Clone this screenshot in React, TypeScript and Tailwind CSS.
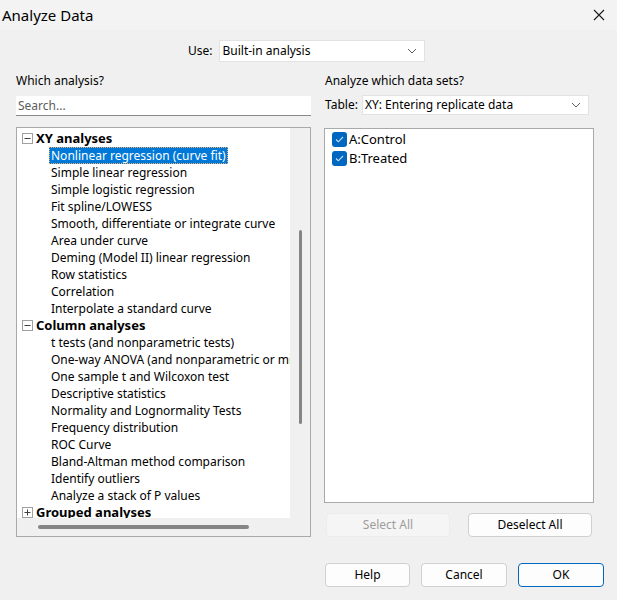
import React from 'react';

const xyItems = [
  'Nonlinear regression (curve fit)',
  'Simple linear regression',
  'Simple logistic regression',
  'Fit spline/LOWESS',
  'Smooth, differentiate or integrate curve',
  'Area under curve',
  'Deming (Model II) linear regression',
  'Row statistics',
  'Correlation',
  'Interpolate a standard curve',
];

const columnItems = [
  't tests (and nonparametric tests)',
  'One-way ANOVA (and nonparametric or mixed)',
  'One sample t and Wilcoxon test',
  'Descriptive statistics',
  'Normality and Lognormality Tests',
  'Frequency distribution',
  'ROC Curve',
  'Bland-Altman method comparison',
  'Identify outliers',
  'Analyze a stack of P values',
];

const Chevron = () => (
  <svg width="10" height="6" viewBox="0 0 10 6" className="shrink-0">
    <path d="M1 1l4 4 4-4" fill="none" stroke="#606060" strokeWidth="1" />
  </svg>
);

const Expander: React.FC<{ open: boolean }> = ({ open }) => (
  <span className="w-[11px] h-[11px] border border-[#a0a0a0] bg-white flex items-center justify-center shrink-0">
    <svg width="7" height="7" viewBox="0 0 7 7">
      <path d="M0.5 3.5h6" stroke="#404040" strokeWidth="1" />
      {!open && <path d="M3.5 0.5v6" stroke="#404040" strokeWidth="1" />}
    </svg>
  </span>
);

const Check: React.FC<{ label: string }> = ({ label }) => (
  <div className="flex items-center h-[19px] gap-[2px]">
    <span className="w-[15px] h-[15px] rounded-[3px] bg-[#0067c0] flex items-center justify-center">
      <svg width="9" height="7" viewBox="0 0 9 7">
        <path d="M1 3.5l2.3 2.3L8 1" fill="none" stroke="#cfe3f7" strokeWidth="1.1" />
      </svg>
    </span>
    <span className="text-[13px] text-black">{label}</span>
  </div>
);

const Button: React.FC<{ label: string; w: string; disabled?: boolean; primary?: boolean }> = ({ label, w, disabled, primary }) => (
  <div
    className={`${w} shrink-0 h-[24px] rounded-[4px] flex items-center justify-center text-[12px] ${
      disabled
        ? 'bg-[#f5f5f5] border border-[#ececec] text-[#9d9d9d]'
        : primary
        ? 'bg-[#fdfdfd] border border-[#0067c0] text-black'
        : 'bg-[#fdfdfd] border border-[#d0d0d0] text-black'
    }`}
  >
    {label}
  </div>
);

export default function App() {
  return (
    <div
      className="w-[617px] h-[600px] bg-[#f0f0f0] flex flex-col overflow-hidden text-black"
      style={{ fontFamily: '"Noto Sans", "Open Sans", sans-serif' }}
    >
      {/* title bar */}
      <div className="h-[30px] bg-[#f3f3f3] flex items-center justify-between pl-[2px] pr-[12px]">
        <span className="text-[15px] leading-none">Analyze Data</span>
        <svg width="12" height="12" viewBox="0 0 12 12">
          <path d="M1 1l10 10M11 1L1 11" stroke="#1a1a1a" strokeWidth="1.1" />
        </svg>
      </div>

      {/* use row */}
      <div className="flex items-center pl-[188px] pt-[10px] gap-[6px]">
        <span className="text-[12px]">Use:</span>
        <div className="w-[206px] h-[22px] bg-white border border-[#e2e2e2] flex items-center justify-between pl-[3px] pr-[7px]">
          <span className="text-[12px]">Built-in analysis</span>
          <Chevron />
        </div>
      </div>

      <div className="flex pl-[16px] pt-[10px] gap-[13px]">
        {/* left column */}
        <div className="w-[295px] flex flex-col">
          <span className="text-[12px] h-[17px] leading-[17px]">Which analysis?</span>
          <div className="mt-[7px] h-[20px] bg-white border-b border-[#8a8a8a] flex items-center pl-[2px]">
            <span className="text-[12px] text-[#5c5c5c]">Search...</span>
          </div>
          <div className="mt-[11px] h-[410px] border border-[#a9a9a9] bg-[#f0f0f0] flex flex-col">
            <div className="flex flex-1 min-h-0">
              <div className="w-[273px] bg-white overflow-hidden text-[12px] leading-[17px] pt-[2px] pl-[5px]">
                <div className="flex items-center gap-[3px] h-[17px]">
                  <Expander open />
                  <span className="font-bold text-[13px]">XY analyses</span>
                </div>
                {xyItems.map((t, i) => (
                  <div key={t} className="h-[17px] pl-[29px] whitespace-nowrap">
                    {i === 0 ? (
                      <span className="bg-[#0078d7] text-white px-[2px] -ml-[2px] outline outline-1 outline-dotted outline-[#f0b070] -outline-offset-1">
                        {t}
                      </span>
                    ) : (
                      t
                    )}
                  </div>
                ))}
                <div className="flex items-center gap-[3px] h-[17px]">
                  <Expander open />
                  <span className="font-bold text-[13px]">Column analyses</span>
                </div>
                {columnItems.map((t) => (
                  <div key={t} className="h-[17px] pl-[29px] whitespace-nowrap">
                    {t}
                  </div>
                ))}
                <div className="flex items-center gap-[3px] h-[17px]">
                  <Expander open={false} />
                  <span className="font-bold text-[13px]">Grouped analyses</span>
                </div>
              </div>
              <div className="flex-1 flex justify-center pt-[102px]">
                <div className="w-[3px] h-[194px] rounded-full bg-[#858585]" />
              </div>
            </div>
            <div className="h-[18px] flex items-center pl-[21px]">
              <div className="w-[211px] h-[4px] rounded-full bg-[#858585]" />
            </div>
          </div>
        </div>

        {/* right column */}
        <div className="w-[270px] flex flex-col">
          <span className="text-[12px] h-[17px] leading-[17px] pl-[1px]">Analyze which data sets?</span>
          <div className="mt-[6px] flex items-center gap-[4px] pl-[1px]">
            <span className="text-[12px]">Table:</span>
            <div className="w-[227px] h-[20px] bg-white border border-[#e2e2e2] flex items-center justify-between pl-[2px] pr-[7px]">
              <span className="text-[12px]">XY: Entering replicate data</span>
              <Chevron />
            </div>
          </div>
          <div className="mt-[13px] h-[375px] bg-white border border-[#a9a9a9] pl-[7px] pt-[1px]">
            <Check label="A:Control" />
            <Check label="B:Treated" />
          </div>
          <div className="mt-[10px] flex justify-between pl-[2px] pr-[2px]">
            <Button label="Select All" w="w-[124px]" disabled />
            <Button label="Deselect All" w="w-[124px]" />
          </div>
          <div className="mt-[26px] flex gap-[11px] pl-[1px]">
            <Button label="Help" w="w-[85px]" />
            <Button label="Cancel" w="w-[86px]" />
            <Button label="OK" w="w-[86px]" primary />
          </div>
        </div>
      </div>
    </div>
  );
}
